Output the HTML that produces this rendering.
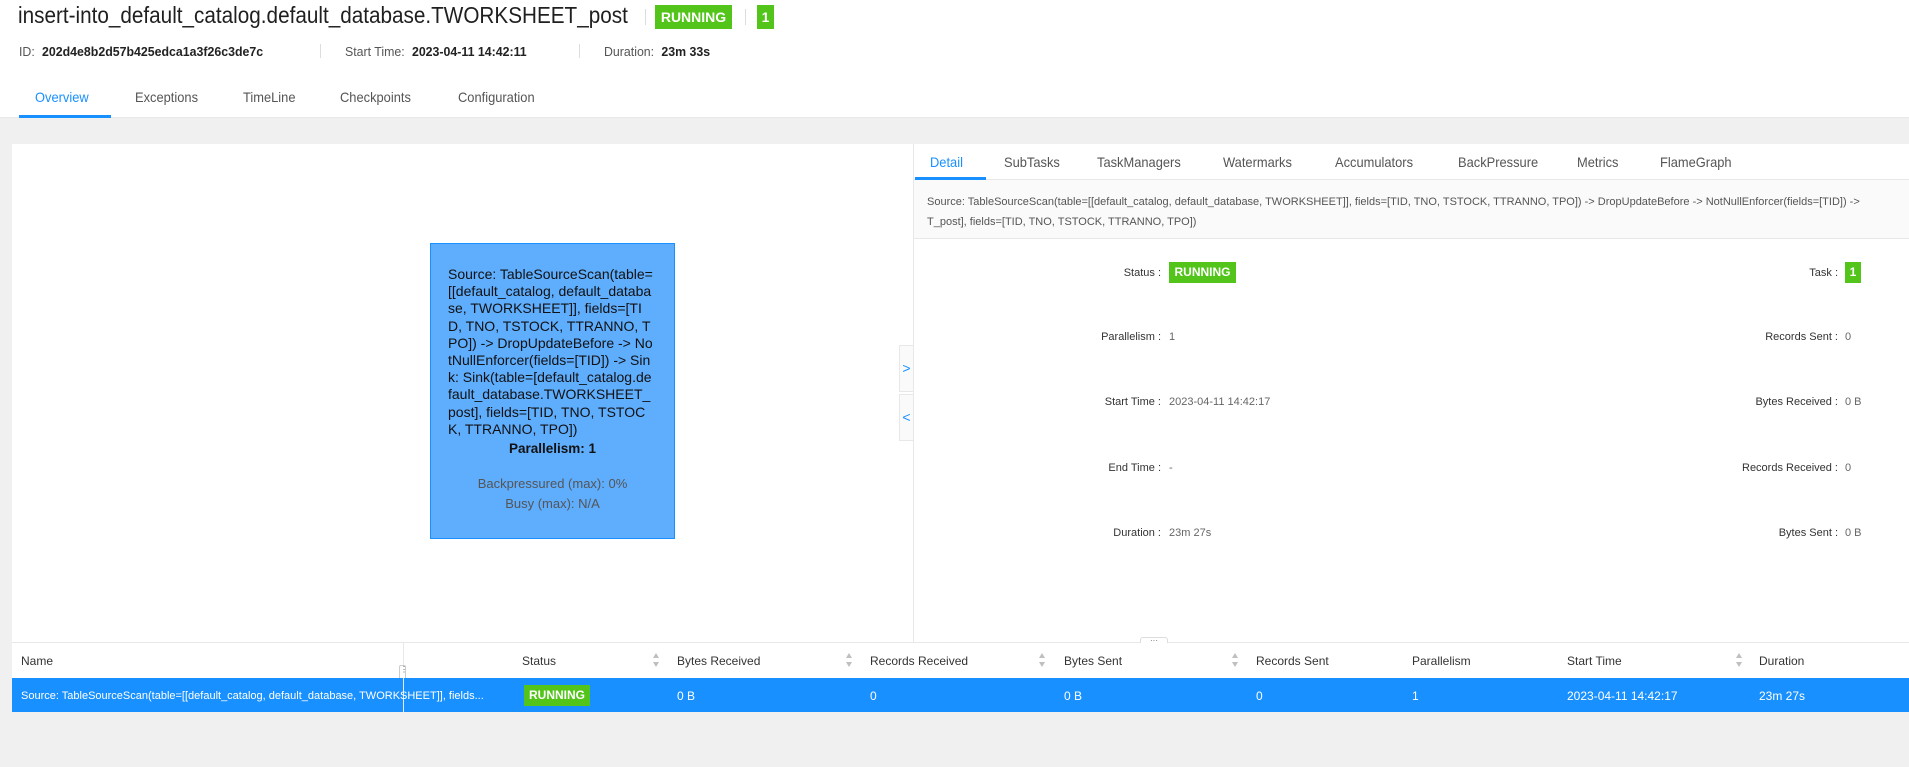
<!DOCTYPE html>
<html><head><meta charset="utf-8"><style>
*{box-sizing:border-box;margin:0;padding:0}
body{width:1909px;height:767px;overflow:hidden;background:#f0f0f0;font-family:"Liberation Sans",sans-serif;color:rgba(0,0,0,.85);position:relative}
.a{position:absolute;white-space:nowrap}
.badge{background:#52c41a;color:#fff;font-weight:bold;text-align:center}
.hdr{position:absolute;left:0;top:0;width:1909px;height:118px;background:#fff;border-bottom:1px solid #e8e8e8}
.dl{position:absolute;font-size:11px;color:#333;text-align:right;white-space:nowrap}
.dv{position:absolute;font-size:11px;color:#666;white-space:nowrap}
.th{position:absolute;top:654px;font-size:12px;color:#333}
.td{position:absolute;top:689px;font-size:12px;color:#fff;white-space:nowrap}
.tab{position:absolute;font-size:14px;color:#555;white-space:nowrap;transform:scaleX(.92);transform-origin:left}
</style></head><body>
<div class="hdr"></div>
<div class="a" style="left:18px;top:2px;font-size:23px;color:#1f1f1f;transform:scaleX(.9);transform-origin:left">insert-into_default_catalog.default_database.TWORKSHEET_post</div>
<div class="a" style="left:645px;top:9px;width:1px;height:16px;background:#ddd"></div>
<div class="a badge" style="left:655px;top:5px;width:77px;height:24px;line-height:24px;font-size:14px">RUNNING</div>
<div class="a" style="left:745px;top:9px;width:1px;height:16px;background:#ddd"></div>
<div class="a badge" style="left:757px;top:5px;width:17px;height:24px;line-height:24px;font-size:14px">1</div>
<div class="a" style="left:19px;top:44px;font-size:13px;color:#555;transform:scaleX(.95);transform-origin:left">ID: <b style="color:#222;margin-left:4px">202d4e8b2d57b425edca1a3f26c3de7c</b></div>
<div class="a" style="left:320px;top:44px;width:1px;height:14px;background:#ddd"></div>
<div class="a" style="left:345px;top:44px;font-size:13px;color:#555;transform:scaleX(.95);transform-origin:left">Start Time: <b style="color:#222;margin-left:4px">2023-04-11 14:42:11</b></div>
<div class="a" style="left:579px;top:44px;width:1px;height:14px;background:#ddd"></div>
<div class="a" style="left:604px;top:44px;font-size:13px;color:#555;transform:scaleX(.95);transform-origin:left">Duration: <b style="color:#222;margin-left:4px">23m 33s</b></div>
<div class="tab" style="left:35px;top:89px;color:#1890ff">Overview</div>
<div class="tab" style="left:135px;top:89px">Exceptions</div>
<div class="tab" style="left:243px;top:89px">TimeLine</div>
<div class="tab" style="left:340px;top:89px">Checkpoints</div>
<div class="tab" style="left:458px;top:89px">Configuration</div>
<div class="a" style="left:19px;top:115px;width:92px;height:3px;background:#1890ff"></div>

<div class="a" style="left:12px;top:144px;width:1897px;height:498px;background:#fff"></div>
<div class="a" style="left:913px;top:144px;width:1px;height:498px;background:#e8e8e8"></div>
<div class="a" style="left:430px;top:243px;width:245px;height:296px;background:#5fadfd;border:1px solid #1890ff"></div>
<div class="a" style="left:448px;top:266px;width:205px;font-size:14px;line-height:17.2px;color:#111;white-space:normal;word-break:break-all">Source: TableSourceScan(table=[[default_catalog, default_database, TWORKSHEET]], fields=[TID, TNO, TSTOCK, TTRANNO, TPO]) -&gt; DropUpdateBefore -&gt; NotNullEnforcer(fields=[TID]) -&gt; Sink: Sink(table=[default_catalog.default_database.TWORKSHEET_post], fields=[TID, TNO, TSTOCK, TTRANNO, TPO])</div>
<div class="a" style="left:430px;top:441px;width:245px;text-align:center;font-size:13.5px;font-weight:bold;color:#111">Parallelism: 1</div>
<div class="a" style="left:430px;top:474px;width:245px;text-align:center;font-size:13px;color:#555;line-height:20px">Backpressured (max): 0%<br>Busy (max): N/A</div>
<div class="a" style="left:899px;top:345px;width:15px;height:47px;background:#fafafa;border:1px solid #e8e8e8;color:#1890ff;font-size:14px;line-height:45px;text-align:center">&gt;</div>
<div class="a" style="left:899px;top:394px;width:15px;height:47px;background:#fafafa;border:1px solid #e8e8e8;color:#1890ff;font-size:14px;line-height:45px;text-align:center">&lt;</div>

<div class="a" style="left:914px;top:179px;width:995px;height:1px;background:#e8e8e8"></div>
<div class="tab" style="left:930px;top:154px;color:#1890ff">Detail</div>
<div class="tab" style="left:1004px;top:154px">SubTasks</div>
<div class="tab" style="left:1097px;top:154px">TaskManagers</div>
<div class="tab" style="left:1223px;top:154px">Watermarks</div>
<div class="tab" style="left:1335px;top:154px">Accumulators</div>
<div class="tab" style="left:1458px;top:154px">BackPressure</div>
<div class="tab" style="left:1577px;top:154px">Metrics</div>
<div class="tab" style="left:1660px;top:154px">FlameGraph</div>
<div class="a" style="left:915px;top:177px;width:71px;height:3px;background:#1890ff"></div>
<div class="a" style="left:914px;top:180px;width:995px;height:59px;background:#fafafa;border-bottom:1px solid #e8e8e8"></div>
<div class="a" style="left:927px;top:192px;font-size:11px;color:#555;line-height:20px">Source: TableSourceScan(table=[[default_catalog, default_database, TWORKSHEET]], fields=[TID, TNO, TSTOCK, TTRANNO, TPO]) -&gt; DropUpdateBefore -&gt; NotNullEnforcer(fields=[TID]) -&gt;<br>T_post], fields=[TID, TNO, TSTOCK, TTRANNO, TPO])</div>

<div class="dl" style="right:748px;top:267px">Status :</div>
<div class="a badge" style="left:1169px;top:262px;width:67px;height:21px;line-height:21px;font-size:12px">RUNNING</div>
<div class="dl" style="right:71px;top:267px">Task :</div>
<div class="a badge" style="left:1845px;top:262px;width:16px;height:21px;line-height:21px;font-size:12px">1</div>
<div class="dl" style="right:748px;top:331px">Parallelism :</div><div class="dv" style="left:1169px;top:331px">1</div>
<div class="dl" style="right:71px;top:331px">Records Sent :</div><div class="dv" style="left:1845px;top:331px">0</div>
<div class="dl" style="right:748px;top:396px">Start Time :</div><div class="dv" style="left:1169px;top:396px">2023-04-11 14:42:17</div>
<div class="dl" style="right:71px;top:396px">Bytes Received :</div><div class="dv" style="left:1845px;top:396px">0 B</div>
<div class="dl" style="right:748px;top:462px">End Time :</div><div class="dv" style="left:1169px;top:462px">-</div>
<div class="dl" style="right:71px;top:462px">Records Received :</div><div class="dv" style="left:1845px;top:462px">0</div>
<div class="dl" style="right:748px;top:527px">Duration :</div><div class="dv" style="left:1169px;top:527px">23m 27s</div>
<div class="dl" style="right:71px;top:527px">Bytes Sent :</div><div class="dv" style="left:1845px;top:527px">0 B</div>

<div class="a" style="left:12px;top:642px;width:1897px;height:1px;background:#e8e8e8"></div>
<div class="a" style="left:1140px;top:637px;width:28px;height:10px;background:#fff;border:1px solid #ddd;border-radius:3px;font-size:8px;line-height:6px;text-align:center;color:#666">···</div>
<div class="a" style="left:12px;top:643px;width:1897px;height:35px;background:#fff"></div>
<div class="a" style="left:403px;top:643px;width:1px;height:69px;background:#e8e8e8"></div>
<div class="a" style="left:399px;top:665px;width:7px;height:26px;background:#fff;border:1px solid #ccc;border-radius:2px;font-size:8px;line-height:7px;text-align:center;color:#555">⋮</div>
<div class="th" style="left:21px">Name</div>
<div class="th" style="left:522px">Status</div>
<div class="th" style="left:677px">Bytes Received</div>
<div class="th" style="left:870px">Records Received</div>
<div class="th" style="left:1064px">Bytes Sent</div>
<div class="th" style="left:1256px">Records Sent</div>
<div class="th" style="left:1412px">Parallelism</div>
<div class="th" style="left:1567px">Start Time</div>
<div class="th" style="left:1759px">Duration</div>
<svg class="a" style="left:0;top:0" width="1909" height="767"><g fill="#bfbfbf">
<path d="M653 658l3-5 3 5zM653 662l3 5 3-5z"/><path d="M846 658l3-5 3 5zM846 662l3 5 3-5z"/><path d="M1039 658l3-5 3 5zM1039 662l3 5 3-5z"/><path d="M1232 658l3-5 3 5zM1232 662l3 5 3-5z"/><path d="M1736 658l3-5 3 5zM1736 662l3 5 3-5z"/></g></svg>
<div class="a" style="left:12px;top:678px;width:1897px;height:34px;background:#1890ff"></div>
<div class="a" style="left:403px;top:678px;width:1px;height:34px;background:#e8e8e8"></div>
<div class="td" style="left:21px;font-size:11px;top:690px">Source: TableSourceScan(table=[[default_catalog, default_database, TWORKSHEET]], fields...</div>
<div class="a badge" style="left:524px;top:685px;width:66px;height:21px;line-height:21px;font-size:12px">RUNNING</div>
<div class="td" style="left:677px">0 B</div>
<div class="td" style="left:870px">0</div>
<div class="td" style="left:1064px">0 B</div>
<div class="td" style="left:1256px">0</div>
<div class="td" style="left:1412px">1</div>
<div class="td" style="left:1567px">2023-04-11 14:42:17</div>
<div class="td" style="left:1759px">23m 27s</div>
</body></html>
